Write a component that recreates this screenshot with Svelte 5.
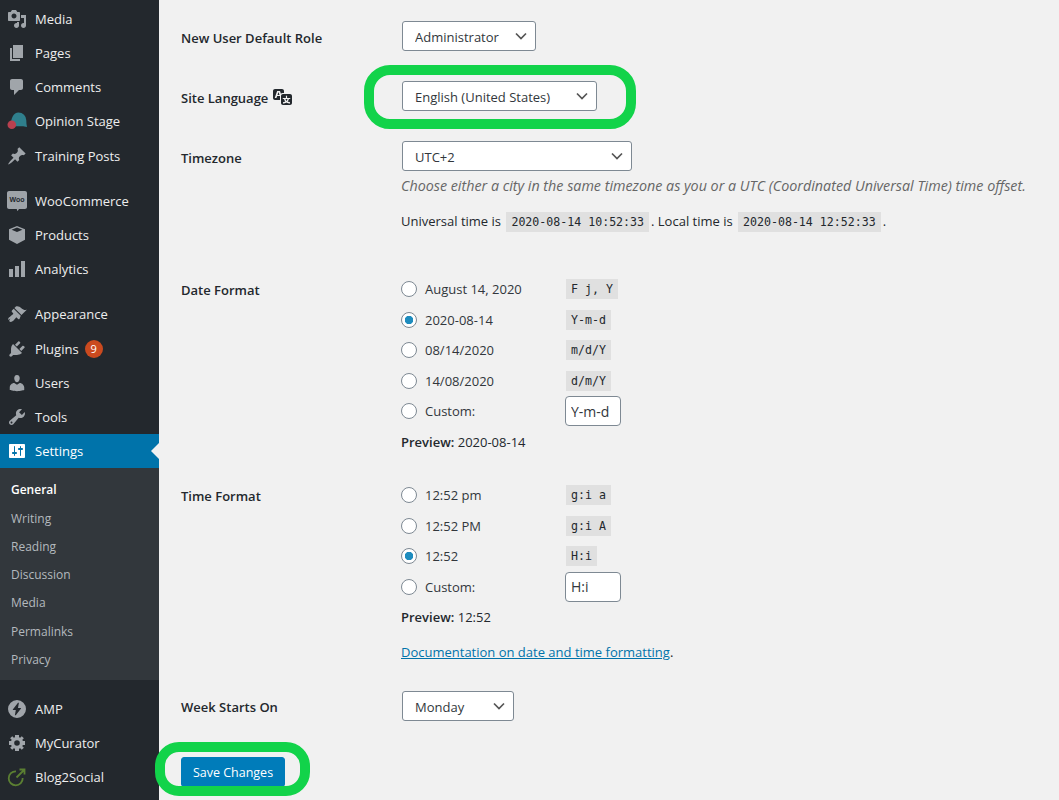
<script>
  // dashicons paths, 20x20 box
  const icons = {
    media: 'M13 11V4c0-.55-.45-1-1-1h-1.67L9 1H5L3.67 3H2c-.55 0-1 .45-1 1v7c0 .55.45 1 1 1h10c.55 0 1-.45 1-1zM7 4.5c1.38 0 2.5 1.12 2.5 2.5S8.38 9.5 7 9.5 4.5 8.38 4.5 7 5.62 4.5 7 4.5zM14 6h5v10.5c0 1.38-1.12 2.5-2.5 2.5S14 17.88 14 16.5s1.12-2.5 2.5-2.5c.17 0 .34.02.5.05V9h-3V6zm-4 8.05V13h2v3.5c0 1.38-1.12 2.5-2.5 2.5S7 17.88 7 16.5 8.12 14 9.5 14c.17 0 .34.02.5.05z',
    pages: 'M6 15V2h10v13H6zm-1 1h8v2H3V5h2v11z',
    comments: 'M5 2h9c1.1 0 2 .9 2 2v7c0 1.1-.9 2-2 2h-2l-5 5v-5H5c-1.1 0-2-.9-2-2V4c0-1.1.9-2 2-2z',
    pin: 'M10.44 3.02l1.82-1.82 6.36 6.35-1.83 1.82c-1.05-.68-2.48-.57-3.41.36l-.75.75c-.92.93-1.04 2.35-.35 3.41l-1.83 1.82-2.41-2.41-2.8 2.79c-.42.42-3.38 2.71-3.8 2.29s1.86-3.39 2.28-3.81l2.79-2.79L4.1 9.36l1.83-1.82c1.05.69 2.48.57 3.4-.36l.75-.75c.93-.92 1.05-2.35.36-3.41z',
    box: 'M10 1l8 3.2v10.6L10 19l-8-4.2V4.2L10 1zM10 2.6L4.6 4.7 10 7l5.4-2.3L10 2.6z',
    analytics: 'M18 18V2h-4v16h4zm-6 0V7H8v11h4zm-6 0v-8H2v8h4z',
    brush: 'M14.48 11.06L7.41 3.99l1.5-1.5c.5-.56 2.3-.47 3.51.32 1.21.8 1.43 1.28 2.91 2.1 1.18.64 2.45 1.26 4.45.85zm-.71.71L6.7 4.7 4.93 6.47c-.39.39-.39 1.02 0 1.41l1.06 1.06c.39.39.39 1.03 0 1.42-.6.6-1.43 1.11-2.21 1.69-.35.26-.7.53-1.01.84C1.43 13.25.9 14.6 1.4 15.9l1.9-1.3-1.2 2.4c.5.6 1.3 1 2 .9 1-.1 2-.8 2.9-1.8.6-.8 1.1-1.6 1.7-2.2.4-.4 1-.4 1.4 0l1 1c.4.4 1 .4 1.4 0z',
    plug: 'M13.11 4.36L9.87 7.6 8 5.73l3.24-3.24c.35-.34 1.05-.2 1.56.32.52.51.66 1.21.31 1.55zm-8 1.77l.91-1.12 9.01 9.01-1.19.84c-.71.71-2.63 1.16-3.82 1.16H6.14L4.9 17.26c-.59.59-1.54.59-2.12 0-.59-.58-.59-1.53 0-2.12l1.24-1.24v-3.88c0-1.13.4-3.19 1.09-3.89zm7.26 3.97l3.24-3.24c.34-.35 1.04-.21 1.55.31.52.51.66 1.21.31 1.55l-3.24 3.25z',
    users: 'M10 9.25c-2.27 0-2.73-3.44-2.73-3.44C7 4.02 7.82 2 9.97 2c2.16 0 2.98 2.02 2.71 3.81 0 0-.41 3.44-2.68 3.44zm0 2.57L12.72 10c2.39 0 4.52 2.33 4.52 4.53v2.49s-3.65 1.13-7.24 1.13c-3.65 0-7.24-1.13-7.24-1.13v-2.49c0-2.25 1.94-4.48 4.47-4.48z',
    tools: 'M16.68 9.77c-1.34 1.34-3.3 1.67-4.95.99l-5.41 6.52c-.99.99-2.59.99-3.58 0s-.99-2.59 0-3.57l6.52-5.42c-.68-1.65-.35-3.61.99-4.95 1.28-1.28 3.12-1.62 4.72-1.06l-2.89 2.89 2.82 2.82 2.86-2.87c.53 1.58.18 3.39-1.08 4.65zM3.81 16.21c.4.39 1.04.39 1.43 0 .4-.4.4-1.04 0-1.43-.39-.4-1.03-.4-1.43 0-.39.39-.39 1.03 0 1.43z',
    settings: 'M18 16V4c0-.55-.45-1-1-1H3c-.55 0-1 .45-1 1v12c0 .55.45 1 1 1h14c.55 0 1-.45 1-1zM8 11h1c.55 0 1 .45 1 1s-.45 1-1 1H8v1.5c0 .28-.22.5-.5.5s-.5-.22-.5-.5V13H6c-.55 0-1-.45-1-1s.45-1 1-1h1V5.5c0-.28.22-.5.5-.5s.5.22.5.5V11zm5-2h-1c-.55 0-1-.45-1-1s.45-1 1-1h1V5.5c0-.28.22-.5.5-.5s.5.22.5.5V7h1c.55 0 1 .45 1 1s-.45 1-1 1h-1v5.5c0 .28-.22.5-.5.5s-.5-.22-.5-.5V9z',
    amp: 'M10 1a9 9 0 1 0 0 18 9 9 0 0 0 0-18zm-1.2 15.2h-.9l.9-5.3H6c-.3 0-.3-.2-.2-.4l5.2-6.7h.9l-.9 5.3h2.8c.3 0 .3.2.2.4z',
    gear: 'M18 12h-2.18a6 6 0 0 1-.5 1.2l1.55 1.55-2.12 2.12-1.55-1.55a6 6 0 0 1-1.2.5V18H8v-2.18a6 6 0 0 1-1.2-.5l-1.55 1.55-2.12-2.12 1.55-1.55a6 6 0 0 1-.5-1.2H2V8h2.18a6 6 0 0 1 .5-1.2L3.13 5.25l2.12-2.12L6.8 4.68a6 6 0 0 1 1.2-.5V2h4v2.18a6 6 0 0 1 1.2.5l1.55-1.55 2.12 2.12-1.55 1.55a6 6 0 0 1 .5 1.2H18v4zM10 7.2a2.8 2.8 0 1 0 0 5.6 2.8 2.8 0 0 0 0-5.6z'
  };

  const groupA = [
    { label: 'Media', icon: 'media' },
    { label: 'Pages', icon: 'pages' },
    { label: 'Comments', icon: 'comments' },
    { label: 'Opinion Stage', icon: 'opinion' },
    { label: 'Training Posts', icon: 'pin' }
  ];
  const groupB = [
    { label: 'WooCommerce', icon: 'woo' },
    { label: 'Products', icon: 'box' },
    { label: 'Analytics', icon: 'analytics' }
  ];
  const groupC = [
    { label: 'Appearance', icon: 'brush' },
    { label: 'Plugins', icon: 'plug', badge: 9 },
    { label: 'Users', icon: 'users' },
    { label: 'Tools', icon: 'tools' }
  ];
  const groupD = [
    { label: 'AMP', icon: 'amp' },
    { label: 'MyCurator', icon: 'gear' },
    { label: 'Blog2Social', icon: 'b2s' }
  ];
  const submenu = ['General', 'Writing', 'Reading', 'Discussion', 'Media', 'Permalinks', 'Privacy'];

  const dateFormats = [
    { label: 'August 14, 2020', code: 'F j, Y' },
    { label: '2020-08-14', code: 'Y-m-d', checked: true },
    { label: '08/14/2020', code: 'm/d/Y' },
    { label: '14/08/2020', code: 'd/m/Y' }
  ];
  const timeFormats = [
    { label: '12:52 pm', code: 'g:i a' },
    { label: '12:52 PM', code: 'g:i A' },
    { label: '12:52', code: 'H:i', checked: true }
  ];
</script>

{#snippet menuIcon(name)}
  <svg class="icon" viewBox="0 0 20 20" aria-hidden="true">
    {#if name === 'opinion'}
      <path fill="#2f7f8c" d="M11.500 1.500a7.800 7.800 0 0 1 7.800 7.800c0 2.400.2 4.500.7 6.700-2-.5-3.500-.7-5-.7H4C3.500 7.500 6.500 1.500 11.500 1.500z" />
      <circle cx="4.800" cy="13.800" r="4.300" fill="#b8404f" />
    {:else if name === 'woo'}
      <path fill="#9ea3a8" d="M2 0h16c1.100 0 2 .9 2 2v14c0 1.100-.9 2-2 2h-6l-1.500 2.200-.8-2.200H2c-1.100 0-2-.9-2-2V2C0 .9.900 0 2 0z" />
      <text x="10" y="11.300" text-anchor="middle" class="woo">Woo</text>
    {:else if name === 'b2s'}
      <path fill="none" stroke="#5b7f32" stroke-width="1.800" d="M9 4.300a7 7 0 1 0 6.700 6.700" />
      <path fill="none" stroke="#5b7f32" stroke-width="1.800" d="M9.500 10.500L17 3M12.500 2.500H17.500V7.500" />
    {:else}
      <path fill="currentColor" d={icons[name]} />
    {/if}
  </svg>
{/snippet}

{#snippet menuGroup(items)}
  <ul class="group">
    {#each items as item}
      <li class="item">
        {@render menuIcon(item.icon)}
        <span>{item.label}</span>
        {#if item.badge}<span class="badge">{item.badge}</span>{/if}
      </li>
    {/each}
  </ul>
{/snippet}

{#snippet options(items, name)}
  {#each items as opt}
    <label class="opt">
      <input type="radio" {name} checked={opt.checked} />
      <span class="opt-label">{opt.label}</span>
      <code>{opt.code}</code>
    </label>
  {/each}
{/snippet}

<div class="page">
  <aside class="sidebar">
    {@render menuGroup(groupA)}
    {@render menuGroup(groupB)}
    {@render menuGroup(groupC)}
    <div class="item current">
      <svg class="icon" viewBox="0 0 20 20" aria-hidden="true"><path fill="currentColor" d={icons.settings} /></svg>
      <span>Settings</span>
    </div>
    <ul class="submenu">
      {#each submenu as link, i}
        <li class:active={i === 0}>{link}</li>
      {/each}
    </ul>
    {@render menuGroup(groupD)}
  </aside>

  <main class="content">
    <div class="row role">
      <div class="th th-select">New User Default Role</div>
      <select class="w-role"><option>Administrator</option></select>
    </div>

    <div class="row lang">
      <div class="th th-select">
        Site Language
        <svg class="translate" viewBox="0 0 20 20" aria-hidden="true"><path fill="#23282d" d="M11 7H9.490c-.630 0-1.250.300-1.590.700L7 5H4.130l-2.390 7h1.690l.740-2H7v4H2c-1.100 0-2-.900-2-2V5c0-1.100.900-2 2-2h7c1.100 0 2 .900 2 2v2zM6.510 9H4.490l1-2.930zM10 8h7c1.100 0 2 .900 2 2v7c0 1.100-.900 2-2 2h-7c-1.100 0-2-.900-2-2v-7c0-1.100.900-2 2-2zm7.250 5v-1.080h-3.170V9.750h-1.160v2.170H9.750V13h1.280c.110.850.560 1.850 1.280 2.620-.870.360-1.890.620-2.310.620-.010.020.220.970.200 1.460.840 0 2.210-.500 3.280-1.150 1.090.650 2.480 1.150 3.340 1.150-.020-.490.200-1.440.200-1.460-.430 0-1.490-.270-2.380-.630.700-.770 1.140-1.770 1.250-2.610h1.360zm-3.810 1.930c-.500-.460-.850-1.130-1.010-1.930h2.090c-.170.800-.510 1.470-1 1.930l-.040.030s-.030-.020-.040-.030z" /></svg>
      </div>
      <select class="w-lang"><option>English (United States)</option></select>
    </div>

    <div class="row tz">
      <div class="th th-select">Timezone</div>
      <div class="td">
        <select class="w-tz"><option>UTC+2</option></select>
        <p class="desc">Choose either a city in the same timezone as you or a UTC (Coordinated Universal Time) time offset.</p>
        <p class="times">Universal time is <code>2020-08-14 10:52:33</code>. Local time is <code>2020-08-14 12:52:33</code>.</p>
      </div>
    </div>

    <div class="row date">
      <div class="th">Date Format</div>
      <div class="td">
        {@render options(dateFormats, 'date')}
        <label class="opt">
          <input type="radio" name="date" />
          <span class="opt-label">Custom:</span>
          <input class="custom" type="text" value="Y-m-d" />
        </label>
        <p class="preview"><b>Preview:</b> 2020-08-14</p>
      </div>
    </div>

    <div class="row time">
      <div class="th">Time Format</div>
      <div class="td">
        {@render options(timeFormats, 'time')}
        <label class="opt">
          <input type="radio" name="time" />
          <span class="opt-label">Custom:</span>
          <input class="custom" type="text" value="H:i" />
        </label>
        <p class="preview"><b>Preview:</b> 12:52</p>
        <p class="doc"><a href="#doc">Documentation on date and time formatting</a>.</p>
      </div>
    </div>

    <div class="row week">
      <div class="th th-select">Week Starts On</div>
      <select class="w-week"><option>Monday</option></select>
    </div>

    <button class="save" type="button">Save Changes</button>
  </main>

  <!-- green highlights drawn over the screenshot -->
  <div class="ring ring-lang"></div>
  <div class="ring ring-save"></div>
</div>

<style>
  :global(body) {
    margin: 0;
    background: #f1f1f1;
    overflow: hidden;
  }

  .page {
    position: relative;
    display: flex;
    height: 800px;
    overflow: hidden;
    font-family: "Open Sans", "Noto Sans", sans-serif;
    font-size: 13px;
    color: #23282d;
  }

  /* Sidebar */
  .sidebar {
    flex: 0 0 159px;
    background: #23282d;
    padding-top: 1.750px;
    color: #eee;
    font-size: 13px;
  }
  ul {
    list-style: none;
    margin: 0;
    padding: 0;
  }
  .group {
    margin-bottom: 11px;
  }
  .item {
    display: flex;
    align-items: center;
    height: 34.200px;
    padding-left: 7px;
    color: #a0a5aa;
  }
  .item span {
    color: #eee;
  }
  .item .icon {
    width: 20px;
    height: 20px;
    margin-right: 8px;
    flex: none;
  }
  .woo {
    font-family: "Liberation Sans", sans-serif;
    font-size: 7px;
    font-weight: bold;
    fill: #23282d;
  }
  .item .badge {
    width: 18px;
    height: 18px;
    margin-left: 6px;
    border-radius: 50%;
    background: #ca4a1f;
    color: #fff;
    font-size: 11px;
    line-height: 18px;
    text-align: center;
  }
  .current {
    position: relative;
    background: #0073aa;
    color: #fff;
    margin-top: -11px;
  }
  .current span {
    color: #fff;
  }
  .current::after {
    content: "";
    position: absolute;
    right: 0;
    top: 9px;
    border: 8px solid transparent;
    border-right-color: #f1f1f1;
    border-left-width: 0;
  }
  .submenu {
    background: #32373c;
    height: 212px;
    padding-top: 8.100px;
    box-sizing: border-box;
    margin-bottom: 11.500px;
    color: #b4b9be;
    font-size: 12px;
  }
  .submenu li {
    height: 28.250px;
    line-height: 28px;
    padding-left: 11px;
  }
  .submenu .active {
    color: #fff;
    font-weight: 600;
  }

  /* Settings form */
  .content {
    flex: 1;
    padding: 21px 0 0 22px;
    min-width: 0;
  }
  .row {
    display: flex;
    align-items: flex-start;
  }
  .th {
    flex: 0 0 221px;
    font-weight: 600;
    line-height: 20px;
  }
  .th-select {
    padding-top: 7px;
  }
  .week .th-select {
    padding-top: 6px;
  }
  .lang,
  .tz {
    margin-top: 30px;
  }
  .date {
    margin-top: 42px;
  }
  .time {
    margin-top: 28.250px;
  }
  .week {
    margin-top: 28.750px;
  }
  .date .th,
  .time .th {
    padding-top: 6px;
  }
  .td {
    flex: 1;
    min-width: 0;
  }
  .translate {
    width: 20px;
    height: 20px;
    vertical-align: 3px;
    margin: -6px 0 -6px 1px;
  }

  select {
    display: block;
    height: 30px;
    box-sizing: border-box;
    margin: 0;
    padding: 2px 24px 0 12px;
    appearance: none;
    border: 1px solid #7e8993;
    border-radius: 3px;
    font: inherit;
    color: #32373c;
    background: #fff url("data:image/svg+xml,%3Csvg xmlns='http://www.w3.org/2000/svg' width='16' height='16'%3E%3Cpath fill='none' stroke='%23555' stroke-width='1.700' d='M3 5.500l5 5 5-5'/%3E%3C/svg%3E") no-repeat right 6px top 50%;
  }
  .w-role { width: 134px; }
  .w-lang { width: 195px; }
  .w-tz { width: 230px; }
  .w-week { width: 112px; }

  p {
    margin: 0 0 0 -1px;
  }
  .desc {
    margin-top: 5px;
    line-height: 20px;
    font-size: 14.300px;
    font-style: italic;
    color: #666;
  }
  .times {
    margin-top: 15px;
    line-height: 20px;
  }
  code {
    margin: 0 2px;
    font-family: "DejaVu Sans Mono", monospace;
    font-size: 11.600px;
    padding: 3px 5px;
    background: rgba(0, 0, 0, 0.07);
  }
  .opt code {
    margin: 0;
  }

  .opt {
    display: flex;
    align-items: center;
    height: 30.500px;
  }
  .opt input[type="radio"] {
    appearance: none;
    width: 16px;
    height: 16px;
    margin: 0 8px 0 -1px;
    box-sizing: border-box;
    flex: none;
    border: 1px solid #7e8993;
    border-radius: 50%;
    background: #fff;
  }
  .opt input[type="radio"]:checked {
    background: radial-gradient(circle, #1e8cbe 0 4px, #fff 4.500px);
  }
  .opt-label {
    flex: 0 0 141px;
    color: #32373c;
  }
  .custom {
    width: 56px;
    height: 30px;
    box-sizing: border-box;
    margin-left: -1px;
    padding: 0 5px;
    border: 1px solid #7e8993;
    border-radius: 4px;
    background: #fff;
    font: inherit;
    font-size: 14px;
    color: #32373c;
  }
  .preview {
    margin-top: 5px;
    line-height: 20px;
  }
  .preview b {
    font-weight: 600;
  }
  .doc {
    margin-top: 15px;
    line-height: 20px;
  }
  .doc a {
    color: #0073aa;
  }

  .save {
    display: block;
    width: 104px;
    height: 30px;
    margin-top: 36px;
    padding: 1px 0 0;
    border: 1px solid #007cba;
    border-radius: 3px;
    background: #007cba;
    color: #fff;
    font: inherit;
    font-size: 12.500px;
  }

  .ring {
    position: absolute;
    box-sizing: border-box;
    border: 10px solid #12d34a;
    pointer-events: none;
  }
  .ring-lang {
    left: 364px;
    top: 65px;
    width: 272px;
    height: 64px;
    border-radius: 26px;
  }
  .ring-save {
    left: 155px;
    top: 742px;
    width: 155px;
    height: 54px;
    border-radius: 24px;
  }
</style>
